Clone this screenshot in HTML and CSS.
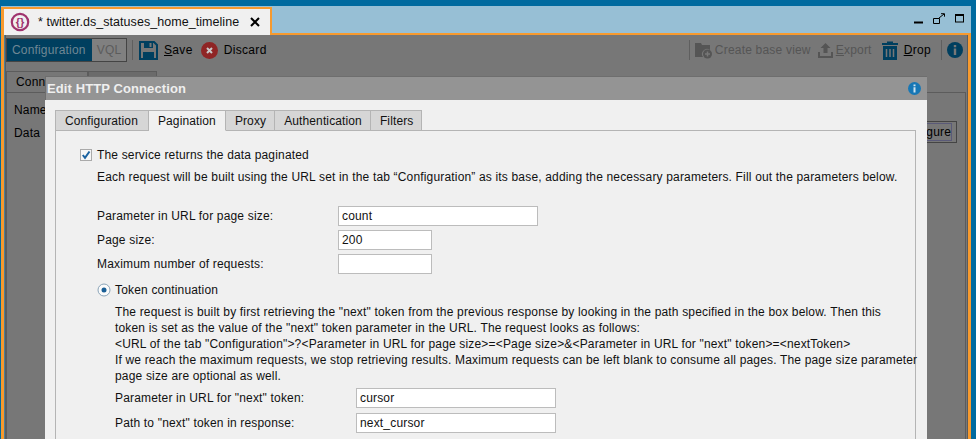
FILE: index.html
```html
<!DOCTYPE html>
<html lang="en">

<head>
    <meta charset="UTF-8">
    <title>Edit HTTP Connection</title>
    <link rel="stylesheet" href="styles.css">
</head>

<body>
    <div class="window">
        <!-- title strip with open tab -->
        <div class="tabStrip">
            <div class="docTab">
                <svg class="docIcon" width="20" height="20" viewBox="0 0 20 20">
                    <circle cx="10" cy="10" r="8.2" fill="none" stroke="#a0346e" stroke-width="2.200" />
                    <text x="10" y="14" text-anchor="middle" class="docIconText">{}</text>
                </svg>
                <span class="docTitle">* twitter.ds_statuses_home_timeline</span>
                <svg class="docClose" width="10" height="10" viewBox="0 0 10 10">
                    <path d="M1 1 9 9M9 1 1 9" stroke="#000" stroke-width="2" />
                </svg>
            </div>
            <div class="winButtons">
                <svg width="10" height="10" viewBox="0 0 10 10">
                    <path d="M0 8.5h9" stroke="#000" stroke-width="2" />
                </svg>
                <svg width="13" height="12" viewBox="0 0 13 12">
                    <path d="M.5 5.5h6v5h-6zM6 5l5-4M8 .7h3.500v3" fill="none" stroke="#000" />
                </svg>
                <svg width="10" height="10" viewBox="0 0 10 10">
                    <rect x=".5" y="1" width="8" height="7" fill="none" stroke="#000" />
                    <path d="M0 1h9" stroke="#000" stroke-width="2" />
                </svg>
            </div>
        </div>

        <!-- greyed editor behind the dialog -->
        <div class="editor">
            <div class="toolbar">
                <div class="segment">
                    <span class="segOn">Configuration</span>
                    <span class="segOff">VQL</span>
                </div>
                <span class="toolSep"></span>
                <svg class="saveIcon" width="19" height="19" viewBox="0 0 19 19">
                    <path d="M1 1h14l3 3v14H1z" fill="none" stroke="#003f5f" stroke-width="2" />
                    <path d="M5 1h9v6H5zM4 11h11v7H4z" fill="#003f5f" />
                    <path d="M10.500 2h2v4h-2z" fill="#777" />
                </svg>
                <span class="toolBtn saveText"><u>S</u>ave</span>
                <svg class="discardIcon" width="17" height="17" viewBox="0 0 17 17">
                    <circle cx="8.500" cy="8.500" r="8.500" fill="#8f2525" />
                    <path d="M6 6l5 5M11 6l-5 5" stroke="#c9c9c9" stroke-width="2" />
                </svg>
                <span class="toolBtn discardText">Discard</span>

                <span class="toolSpacer"></span>

                <span class="toolSep"></span>
                <svg class="baseIcon" width="17" height="17" viewBox="0 0 17 17">
                    <path d="M0 1h6l1 2h8v5a5 5 0 0 0-7 7H0z" fill="#555" />
                    <circle cx="12.500" cy="12" r="4.500" fill="#555" />
                    <path d="M10 12h5M12.500 9.500v5" stroke="#777" stroke-width="1.500" />
                </svg>
                <span class="toolBtn off baseText">Create base view</span>
                <svg class="exportIcon" width="17" height="17" viewBox="0 0 17 17">
                    <path d="M8.500 1l5 5h-3v5h-4V6h-3zM1 10h2v4h11v-4h2v6H1z" fill="#555" />
                </svg>
                <span class="toolBtn off exportText"><u>E</u>xport</span>
                <svg class="dropIcon" width="16" height="19" viewBox="0 0 16 19">
                    <path d="M5 2V.5h6V2h5v2H0V2zM1 5h14v14H1z" fill="#003f5f" />
                    <path d="M4.500 8v8M8 8v8M11.500 8v8" stroke="#777" stroke-width="1.500" />
                </svg>
                <span class="toolBtn dropText"><u>D</u>rop</span>
                <span class="toolSep sepRight"></span>
                <svg class="infoIcon" width="16" height="16" viewBox="0 0 16 16">
                    <circle cx="8" cy="8" r="8" fill="#003f5f" />
                    <path d="M6.800 3h2.400v2.200H6.800zM6.800 6.500h2.400V13H6.800z" fill="#777" />
                </svg>
            </div>

            <div class="backTabs">
                <span class="backTab">Conn</span>
                <span class="backTab second"></span>
            </div>
            <div class="backPanel">
                <div class="backRow">Name</div>
                <div class="backRow">Data</div>
                <span class="backBtn"><span class="backBtnIn">Configure</span></span>
            </div>
        </div>

        <!-- dialog -->
        <div class="dialog">
            <div class="dialogHead">
                <span>Edit HTTP Connection</span>
                <svg width="13" height="13" viewBox="0 0 13 13">
                    <circle cx="6.500" cy="6.500" r="6.500" fill="#1777b5" />
                    <path d="M5.500 2.500h2v1.800h-2zM5.500 5.300h2v5.200h-2z" fill="#cfe3ef" />
                </svg>
            </div>
            <div class="dialogBody">
                <div class="tabs">
                    <span class="tab">Configuration</span>
                    <span class="tab active">Pagination</span>
                    <span class="tab">Proxy</span>
                    <span class="tab">Authentication</span>
                    <span class="tab">Filters</span>
                </div>
                <div class="tabPanel">
                    <div class="checkRow">
                        <svg width="12" height="12" viewBox="0 0 12 12">
                            <rect x=".5" y=".5" width="11" height="11" fill="#f6f6f6" stroke="#aaa" />
                            <path d="M2.800 6 5 8.800 9.500 2.500" fill="none" stroke="#1a62a0" stroke-width="2" />
                        </svg>
                        <span>The service returns the data paginated</span>
                    </div>
                    <p class="intro">Each request will be built using the URL set in the tab “Configuration” as its base, adding the necessary parameters. Fill out the parameters below.</p>

                    <div class="field first">
                        <label>Parameter in URL for page size:</label>
                        <span class="input wide">count</span>
                    </div>
                    <div class="field">
                        <label>Page size:</label>
                        <span class="input">200</span>
                    </div>
                    <div class="field">
                        <label>Maximum number of requests:</label>
                        <span class="input"></span>
                    </div>

                    <div class="radioRow">
                        <svg width="14" height="14" viewBox="0 0 14 14">
                            <circle cx="7" cy="7" r="6" fill="#fbfbfb" stroke="#8aa4b8" />
                            <circle cx="7" cy="7" r="2.500" fill="#1a5f96" />
                        </svg>
                        <span>Token continuation</span>
                    </div>
                    <div class="tokenBlock">
                        <div class="desc">
                            <div>The request is built by first retrieving the "next" token from the previous response by looking in the path specified in the box below. Then this</div>
                            <div>token is set as the value of the "next" token parameter in the URL. The request looks as follows:</div>
                            <div>&lt;URL of the tab "Configuration"&gt;?&lt;Parameter in URL for page size&gt;=&lt;Page size&gt;&amp;&lt;Parameter in URL for "next" token&gt;=&lt;nextToken&gt;</div>
                            <div>If we reach the maximum requests, we stop retrieving results. Maximum requests can be left blank to consume all pages. The page size parameter</div>
                            <div>page size are optional as well.</div>
                        </div>
                        <div class="field token">
                            <label>Parameter in URL for "next" token:</label>
                            <span class="input wide">cursor</span>
                        </div>
                        <div class="field token">
                            <label>Path to "next" token in response:</label>
                            <span class="input wide">next_cursor</span>
                        </div>
                    </div>
                </div>
            </div>
        </div>
    </div>
</body>

</html>
```

FILE: styles.css
```css
* {
    box-sizing: border-box;
}

html,
body {
    margin: 0;
    height: 100%;
    overflow: hidden;
}

body {
    font-family: "Liberation Sans", Arial, sans-serif;
    font-size: 12px;
    letter-spacing: 0.17px;
    color: #111;
}

.window {
    position: relative;
    width: 976px;
    height: 439px;
    overflow: hidden;
    display: flex;
    flex-direction: column;
    background-color: #97bfd5;
    border-style: solid;
    border-color: #006a9f;
    border-width: 6px 5px 0 1px;
}

/* title strip */
.tabStrip {
    height: 29px;
    flex: none;
    display: flex;
    align-items: flex-end;
    justify-content: space-between;
    border-bottom: 2px solid #f79a2e;
    position: relative;
}

.docTab {
    width: 271px;
    height: 28px;
    margin-bottom: -2px;
    display: flex;
    align-items: center;
    padding-left: 6px;
    background-color: #f0f0f0;
    border-style: solid;
    border-color: #f79a2e;
    border-width: 2px 2px 0 3px;
    font-size: 12.5px;
    letter-spacing: 0.05px;
    position: relative;
}

.docIconText {
    font-family: "Liberation Sans", sans-serif;
    font-size: 11px;
    font-weight: bold;
    fill: #a0346e;
}

.docTitle {
    margin-left: 8px;
    white-space: nowrap;
}

.docClose {
    margin-left: 11px;
}

.winButtons {
    display: flex;
    align-items: center;
    gap: 9px;
    padding: 0 6px 8px 0;
}

/* editor behind */
.editor {
    flex: 1;
    background-color: #777;
    border-left: 3px solid #f79a2e;
    border-right: 3px solid #f79a2e;
    box-shadow: inset 1px 0 #4d7f98, inset 2px 0 #5c5c5c, inset -1px 0 #5c5c5c;
    padding: 3px 2px 0 2px;
    color: #000;
}

.toolbar {
    height: 24px;
    display: flex;
    align-items: center;
    gap: 4px;
    padding-right: 3px;
}

.segment {
    display: flex;
    width: 121px;
    height: 24px;
    border: 1px solid #444;
}

.segOn {
    width: 85px;
    background-color: #003f5f;
    color: #6f8794;
    padding-left: 5px;
    line-height: 22px;
}

.segOff {
    flex: 1;
    color: #5c5c5c;
    background-color: #808080;
    text-align: center;
    line-height: 22px;
}

.toolSep {
    width: 1px;
    height: 20px;
    margin-left: 1px;
    background-color: #5f5f5f;
}

.toolBtn {
    white-space: nowrap;
    letter-spacing: 0.33px;
}

.toolBtn.off {
    color: #555;
    letter-spacing: 0.2px;
}

.saveIcon,
.saveText,
.discardText,
.dropText {
    margin-left: 2px;
}

.discardIcon {
    margin-left: 4px;
}

.baseIcon {
    margin-left: 1px;
}

.baseText {
    margin-left: -1px;
}

.exportText {
    margin-left: -2px;
}

.exportIcon {
    margin-left: 2px;
}

.dropIcon {
    margin-left: 6px;
}

.sepRight {
    margin-left: 6px;
}

.infoIcon {
    margin-left: 1px;
}

.toolSpacer {
    flex: 1;
}

.backTabs {
    display: flex;
    margin-top: 9px;
    height: 21px;
}

.backTab {
    width: 82px;
    padding: 3px 0 0 9px;
    background-color: #777;
    border: 1px solid #5c5c5c;
    border-bottom: none;
}

.backTab.second {
    width: 69px;
    background-color: #6b6b6b;
}

.backPanel {
    position: relative;
    height: 360px;
    border: 1px solid #5c5c5c;
    padding: 8px 7px;
}

.backRow {
    height: 23px;
    line-height: 18px;
}

.backBtn {
    position: absolute;
    right: 8px;
    top: 28px;
    width: 64px;
    height: 22px;
    border: 1px solid #444;
    padding: 1px 4px 1px 0;
    text-align: right;
}

.backBtnIn {
    display: block;
    border: 1px solid #5a5a78;
    height: 18px;
    line-height: 16px;
    overflow: hidden;
    white-space: nowrap;
}

/* dialog */
.dialog {
    position: absolute;
    left: 44px;
    top: 70px;
    width: 882px;
    height: 370px;
    display: flex;
    flex-direction: column;
    background-color: #f0f0f0;
}

.dialogHead {
    height: 24px;
    flex: none;
    background-color: #949494;
    border-top: 1px solid #6e6e6e;
    border-left: 1px solid #6e6e6e;
    color: #efefef;
    font-size: 13px;
    font-weight: bold;
    letter-spacing: 0.1px;
    display: flex;
    align-items: center;
    justify-content: space-between;
    padding: 0 6px 0 1px;
}

.dialogBody {
    flex: 1;
    padding: 10px 11px 0 10px;
}

.tabs {
    display: flex;
    height: 21px;
    position: relative;
    z-index: 1;
}

.tab {
    padding: 3px 8px 0 9px;
    background-color: #d6d6d6;
    border: 1px solid #b4b4b4;
    border-left: none;
    line-height: 15px;
    white-space: nowrap;
    letter-spacing: 0.12px;
}

.tab:first-child {
    border-left: 1px solid #b4b4b4;
    padding-right: 10px;
}

.tab.active {
    background-color: #f0f0f0;
    border-bottom-color: #f0f0f0;
    padding: 3px 9px 0 9px;
}

.tabPanel {
    height: 330px;
    margin-top: -1px;
    border: 1px solid #b4b4b4;
    padding: 16px 0 0 24px;
}

.checkRow {
    display: flex;
    align-items: center;
    gap: 5px;
    height: 16px;
}

.intro {
    margin: 6px 0 0 17px;
    line-height: 16px;
    white-space: nowrap;
}

.field {
    display: flex;
    align-items: center;
    height: 21px;
    margin: 3px 0 0 17px;
}

.field.first {
    margin-top: 20px;
}

.field label {
    width: 241px;
    flex: none;
}

.input {
    display: block;
    width: 94px;
    height: 20px;
    background-color: #fff;
    border: 1px solid #bcbcbc;
    padding-left: 3px;
    line-height: 19px;
}

.input.wide {
    width: 200px;
}

.radioRow {
    display: flex;
    align-items: center;
    gap: 4px;
    height: 16px;
    margin: 8px 0 0 17px;
}

.tokenBlock {
    margin: 6px 0 0 35px;
}

.desc {
    line-height: 16px;
    white-space: nowrap;
}

.field.token {
    margin: 3px 0 4px 0;
}
```
